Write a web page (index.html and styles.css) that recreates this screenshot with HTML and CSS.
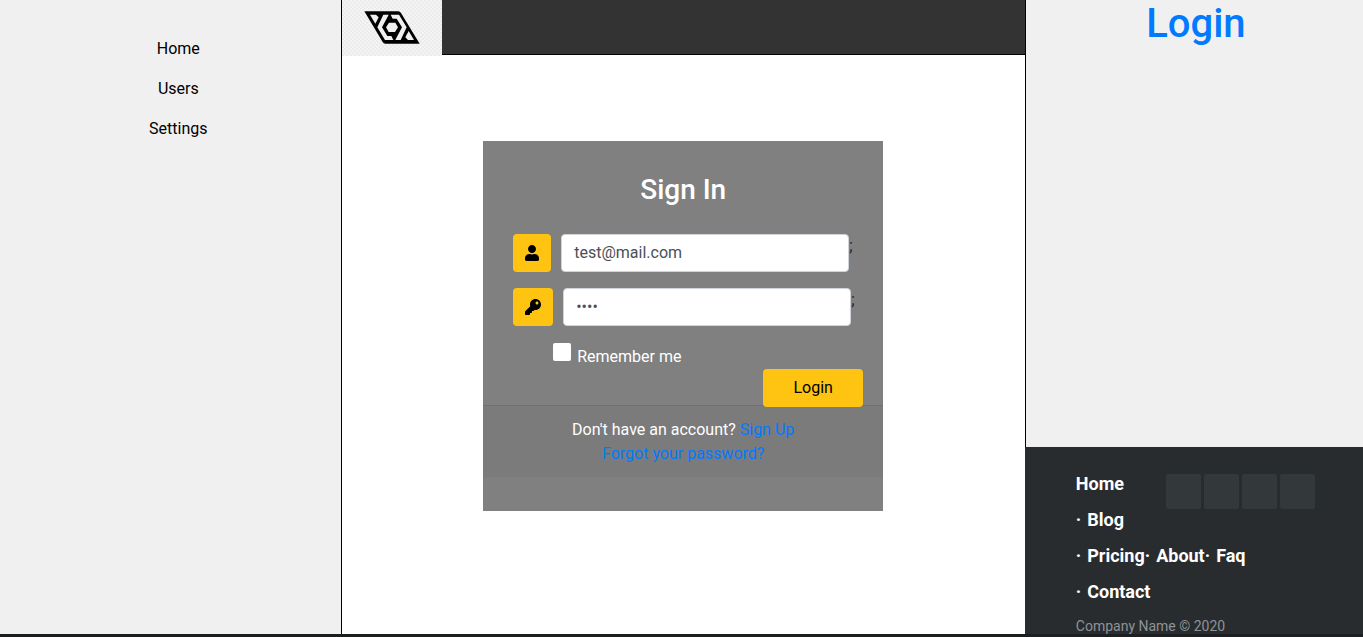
FILE: index.html
```html
<!DOCTYPE html>
<html lang="en">
<head>
<meta charset="utf-8">
<title>Login</title>
<link rel="stylesheet" href="styles.css">
</head>
<body>
<div class="layout">
  <nav class="sidebar" aria-label="Main">
    <ul class="menu">
      <li><a href="#">Home</a></li>
      <li><a href="#">Users</a></li>
      <li><a href="#">Settings</a></li>
    </ul>
  </nav>

  <main class="content">
    <header class="topbar">
      <a class="brand" href="#" aria-label="Start page">
        <svg viewBox="36 0 300 168" aria-hidden="true">
          <path d="M103 34H205Q210 34 213 39L269 131H166Q161 131 158 126Z"/>
          <g fill="#f0f0f0">
            <path d="M120 44H138L146 52L136 71Z"/>
            <path d="M252 120H234L226 112L236 93Z"/>
            <path d="M160 44H176L171 54L156 82L172 108H184L190 120H165L142 82Z"/>
            <path d="M212 120H196L201 110L216 82L200 56H188L182 44H207L230 82Z"/>
            <path d="M177 68H196L204 82L195 96H176L168 82Z"/>
          </g>
        </svg>
      </a>
    </header>

    <section class="card">
      <h2 class="card-title">Sign In</h2>
      <form class="card-form">
        <div class="field">
          <label class="field-icon" for="email" aria-label="Email">
            <svg width="14" height="16" viewBox="0 0 448 512" aria-hidden="true"><path d="M224 256c70.700 0 128-57.300 128-128S294.700 0 224 0 96 57.300 96 128s57.300 128 128 128zm89.600 32h-16.700c-22.200 10.200-46.900 16-72.900 16s-50.600-5.800-72.900-16h-16.700C60.200 288 0 348.200 0 422.400V464c0 26.500 21.500 48 48 48h352c26.500 0 48-21.500 48-48v-41.600c0-74.200-60.200-134.400-134.400-134.400z"/></svg>
          </label>
          <input class="field-input" id="email" type="text" value="test@mail.com">
          <span>;</span>
        </div>
        <div class="field">
          <label class="field-icon" for="password" aria-label="Password">
            <svg width="16" height="16" viewBox="0 0 512 512" aria-hidden="true"><path d="M512 176.001C512 273.203 433.202 352 336 352c-11.220 0-22.190-1.062-32.827-3.069l-24.012 27.014A23.999 23.999 0 0 1 261.223 384H224v40c0 13.255-10.745 24-24 24h-40v40c0 13.255-10.745 24-24 24H24c-13.255 0-24-10.745-24-24v-78.059c0-6.365 2.529-12.470 7.029-16.971l161.802-161.802C163.108 213.814 160 195.271 160 176 160 78.798 238.797.001 335.999 0 433.488-.001 512 78.511 512 176.001zM336 128c0 26.510 21.490 48 48 48s48-21.490 48-48-21.490-48-48-48-48 21.490-48 48z"/></svg>
          </label>
          <input class="field-input" id="password" type="password" value="test">
          <span>;</span>
        </div>
        <div class="remember">
          <input class="remember-box" id="remember" type="checkbox">
          <label for="remember">Remember me</label>
        </div>
        <button class="submit" type="button">Login</button>
      </form>
      <div class="card-links">
        <p>Don't have an account? <a href="#">Sign Up</a></p>
        <p><a href="#">Forgot your password?</a></p>
      </div>
    </section>
  </main>

  <aside class="aside">
    <h1 class="page-title">Login</h1>
    <footer class="footer">
      <div class="social">
        <a href="#" aria-label="Facebook"></a>
        <a href="#" aria-label="Twitter"></a>
        <a href="#" aria-label="LinkedIn"></a>
        <a href="#" aria-label="GitHub"></a>
      </div>
      <p class="footer-links"><a href="#">Home</a> <a class="dotted" href="#">Blog</a> <a class="dotted" href="#">Pricing</a><a class="dotted" href="#">About</a><a class="dotted" href="#">Faq</a> <a class="dotted" href="#">Contact</a></p>
      <p class="copyright">Company Name © 2020</p>
    </footer>
  </aside>
</div>
</body>
</html>
```
FILE: styles.css
```css
* {
  box-sizing: border-box;
}

body {
  margin: 0;
  height: 100vh;
  overflow: hidden;
  border-bottom: 3px solid #1c1f20;
  background: #fff;
  color: #212529;
  font: 16px/24px Roboto, "Liberation Sans", sans-serif;
}

h1, h2, p, ul {
  margin: 0;
  padding: 0;
}

a {
  color: #007bff;
  text-decoration: none;
}

.layout {
  display: grid;
  grid-template-columns: 1fr 2fr 0.99fr;
  height: 100%;
}

.sidebar {
  border-right: 1px solid #000;
  background: #f0f0f0;
}

.menu {
  display: flex;
  flex-direction: column;
  gap: 16px;
  padding: 37px 0 0 16px;
  list-style: none;
  text-align: center;
}

.menu a {
  color: #000;
}

.topbar {
  height: 55px;
  border-bottom: 1px solid #000;
  background: #333;
}

.brand {
  display: block;
  width: 100px;
  height: 56px;
  background: repeating-conic-gradient(#ececec 0 25%, #f4f4f4 0 50%) 0 0 / 4px 4px;
}

.brand svg {
  display: block;
  width: 100%;
  height: 100%;
}

.card {
  width: 400px;
  max-width: 100%;
  margin: 86px auto 0;
  padding-bottom: 34px;
  background: #808080;
}

.card-title {
  padding: 32px 0 28px;
  color: #fff;
  font-size: 28px;
  font-weight: 500;
  line-height: 33px;
  text-align: center;
}

.card-form {
  display: flex;
  flex-direction: column;
  padding: 0 20px 0 30px;
}

.field {
  display: flex;
  margin-bottom: 16px;
}

.field-icon {
  display: flex;
  align-items: center;
  height: 38px;
  margin-right: 10px;
  padding: 0 12px;
  border-radius: 4px;
  background: #ffc312;
}

.field-icon svg {
  fill: #000;
}

.field-input {
  width: 288px;
  height: 38px;
  padding: 5px 12px 7px;
  border: 1px solid #ced4da;
  border-radius: 4px;
  background: #fff;
  color: #495057;
  font: inherit;
}

.remember {
  display: flex;
  gap: 6px;
  padding-left: 40px;
  color: #fff;
}

.remember-box {
  appearance: none;
  width: 18px;
  height: 18px;
  margin: 1px 0 0;
  border-radius: 2px;
  background: #fff;
}

.remember label {
  padding-top: 3px;
}

.submit {
  align-self: flex-end;
  position: relative;
  width: 100px;
  height: 38px;
  margin: 0 0 -2px;
  border: 0;
  border-radius: 4px;
  background: #ffc312;
  color: #000;
  font: inherit;
}

.card-links {
  padding: 12px 20px 11px;
  border-top: 1px solid #707070;
  background: #7b7b7b;
  color: #fff;
  text-align: center;
}

.aside {
  display: flex;
  flex-direction: column;
  justify-content: space-between;
  border-left: 1px solid #000;
  background: #f0f0f0;
}

.page-title {
  padding-left: 3px;
  color: #007bff;
  font-size: 40px;
  font-weight: 500;
  line-height: 48px;
  text-align: center;
}

.footer {
  margin-left: -1px;
  padding: 19px 48px 0 51px;
  background: #292c2f;
}

.social {
  float: right;
  display: flex;
  gap: 3px;
  padding-top: 8px;
}

.social a {
  width: 35px;
  height: 35px;
  border-radius: 2px;
  background: #33383b;
}

.footer-links {
  font-size: 18px;
  font-weight: 700;
  line-height: 36px;
}

.footer-links a {
  color: #fff;
}

.dotted {
  display: inline-block;
}

.dotted::before {
  content: "·";
  padding-right: 6px;
}

.copyright {
  padding-top: 8px;
  color: #8f9296;
  font-size: 14px;
  line-height: 16px;
}
```
